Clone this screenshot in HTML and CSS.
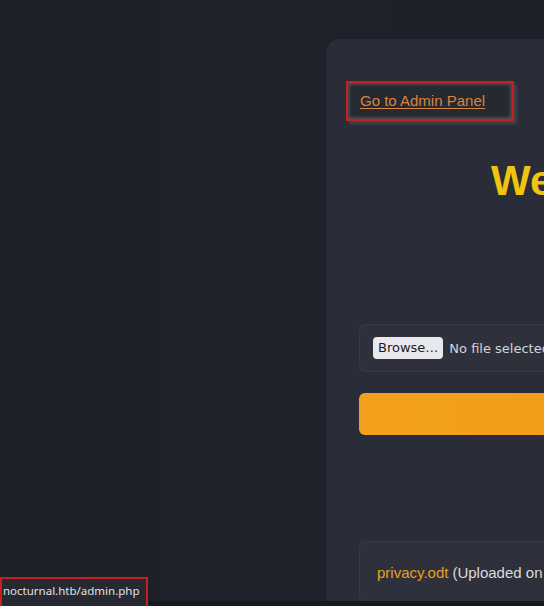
FILE: index.html
```html
<!DOCTYPE html>
<html>
<head>
<meta charset="utf-8">
<link rel="stylesheet" href="styles.css">
</head>
<body>
<div class="page">
  <div class="view">
    <div class="side"></div>
    <main class="card">
      <div class="admin-box"><a class="admin-link" href="#">Go to Admin Panel</a></div>
      <h1 class="title">Welcome</h1>
      <div class="file-row">
        <span class="browse">Browse…</span>
        <span class="nofile">No file selected.</span>
      </div>
      <div class="upload-btn"></div>
      <div class="file-item">
        <a class="file-name" href="#">privacy.odt</a> <span class="file-meta">(Uploaded on</span>
      </div>
    </main>
  </div>
  <div class="edge"></div>
</div>
<div class="status">nocturnal.htb/admin.php</div>
</body>
</html>
```
FILE: styles.css
```css
html, body {
  margin: 0;
  padding: 0;
  width: 544px;
  height: 606px;
  overflow: hidden;
  background: #1d2029;
  font-family: "Liberation Sans", Arial, sans-serif;
}
.page {
  display: flex;
  flex-direction: column;
  height: 606px;
}
.view {
  display: flex;
  flex: 0 0 601px;
  overflow: hidden;
  background: linear-gradient(90deg, #1c1f28 0%, #1e222b 45%, #1d2029 100%);
}
.edge {
  flex: 1;
  background: #17191f;
}
.side {
  flex: 0 0 327px;
}
.card {
  flex: 0 0 600px;
  margin-top: 39px;
  background: #2a2d37;
  border-radius: 12px 0 0 0;
  box-shadow: -1px 0 0 #23262e;
  padding: 42px 0 0 0;
  box-sizing: border-box;
  height: 620px;
}
.admin-box {
  display: inline-block;
  margin-left: 19px;
  border: 2px solid #c81e1e;
  width: 164px;
  height: 36px;
  box-sizing: content-box;
  background: #262932;
  box-shadow: inset 0 0 3px 2px #4a4d55, 3px 3px 3px rgba(90, 92, 100, 0.5);
  line-height: 35px;
}
.admin-link {
  margin-left: 12px;
  color: #d9843a;
  font-size: 15px;
  text-decoration: underline;
  text-underline-offset: 2px;
}
.title {
  margin: 36px 0 0 164px;
  font-size: 42px;
  line-height: 48px;
  font-weight: bold;
  color: #f1c40f;
  white-space: nowrap;
}
.file-row {
  margin: 119px 0 0 32px;
  height: 48px;
  box-sizing: border-box;
  background: #2e313b;
  border: 1px solid #363944;
  border-right: none;
  border-radius: 6px 0 0 6px;
  display: flex;
  align-items: center;
  padding-left: 13px;
  gap: 6px;
  font-family: "DejaVu Sans", sans-serif;
  font-size: 13px;
}
.browse {
  background: #e9e9ed;
  color: #1b1b1d;
  border-radius: 4px;
  padding: 2px 5px;
  height: 18px;
  line-height: 18px;
}
.nofile {
  color: #d4d4d8;
  white-space: nowrap;
}
.upload-btn {
  margin: 21px 0 0 32px;
  height: 42px;
  border-radius: 6px 0 0 6px;
  background: linear-gradient(90deg, #f3a01c, #f09a1a);
}
.file-item {
  margin: 106px 0 0 32px;
  height: 62px;
  box-sizing: border-box;
  background: #2e313b;
  border: 1px solid #363944;
  border-right: none;
  border-radius: 6px 0 0 6px;
  display: flex;
  align-items: center;
  padding-left: 17px;
  gap: 4px;
  font-size: 15px;
  white-space: nowrap;
}
.file-name {
  color: #e6a020;
  text-decoration: none;
}
.file-meta {
  color: #dcdcdc;
}
.status {
  position: fixed;
  left: 0;
  bottom: 0;
  width: 143px;
  height: 27px;
  border: 2px solid #c81e1e;
  border-bottom: none;
  background: #262932;
  color: #e2e2e2;
  font-family: "Noto Sans", sans-serif;
  font-size: 11.5px;
  line-height: 24px;
  padding-left: 1px;
  white-space: nowrap;
  overflow: hidden;
}
```
